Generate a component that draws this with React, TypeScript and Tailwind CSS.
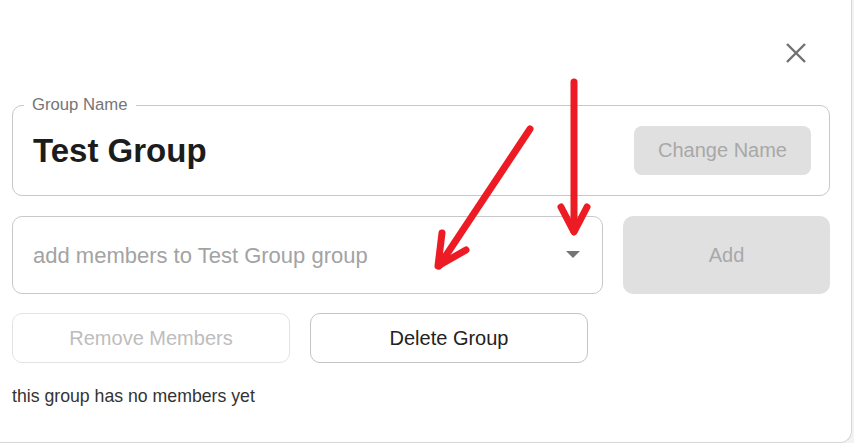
import React from 'react';

const font = { fontFamily: '"Liberation Sans", Arial, sans-serif' };

function CloseIcon() {
  return (
    <svg width="22" height="22" viewBox="0 0 22 22" fill="none">
      <path d="M2 2 L20 20 M20 2 L2 20" stroke="#707070" strokeWidth="2.4" />
    </svg>
  );
}

function Annotations() {
  // red arrows drawn over the screenshot
  return (
    <svg className="pointer-events-none absolute inset-0" width="854" height="443">
      <g stroke="#ed1c24" strokeWidth="7" strokeLinecap="round" strokeLinejoin="round" fill="none">
        <path d="M574 82 L574 231" />
        <path d="M561 207 L574 232 L587 207" />
        <path d="M530 129 L439 266" />
        <path d="M442 233 L438 266 L466 250" />
      </g>
    </svg>
  );
}

export default function App() {
  return (
    <div className="relative h-[443px] w-[854px] overflow-hidden bg-[#f3f3f3]" style={font}>
      <div className="flex h-full w-[852px] flex-col rounded-br-[12px] border-r border-b border-[#d6d6d6] bg-white">
        {/* Header */}
        <div className="flex h-[97px] items-center justify-end pr-[44px] pt-[8px]">
          <CloseIcon />
        </div>

        {/* Group name field */}
        <div className="pl-[12px] pr-[21px]">
          <fieldset className="flex h-[99px] items-center justify-between rounded-[10px] border border-[#c8c8c8] pl-[20px] pr-[18px] pb-[8px]">
            <legend className="ml-[-9px] px-[8px] text-[16.7px] leading-[16px] text-[#757575]">Group Name</legend>
            <span className="text-[33px] font-bold leading-none text-[#1c1c1c]">Test Group</span>
            <button className="h-[49px] w-[177px] rounded-[8px] bg-[#e0e0e0] text-[20px] text-[#a8a8a8]">
              Change Name
            </button>
          </fieldset>
        </div>

        {/* Add members row */}
        <div className="mt-[20px] flex gap-[20px] pl-[12px] pr-[21px]">
          <div className="flex h-[78px] w-[591px] items-center justify-between rounded-[10px] border border-[#c8c8c8] pl-[20px] pr-[22px]">
            <span className="text-[22px] text-[#a3a3a3]">add members to Test Group group</span>
            <svg width="14" height="8" viewBox="0 0 14 8">
              <path d="M0 0 L14 0 L7 7 Z" fill="#757575" />
            </svg>
          </div>
          <button className="h-[78px] flex-1 rounded-[10px] bg-[#e0e0e0] text-[20px] text-[#a8a8a8]">Add</button>
        </div>

        {/* Actions */}
        <div className="mt-[19px] flex gap-[20px] px-[12px]">
          <button className="h-[50px] w-[278px] rounded-[10px] border border-[#e3e3e3] text-[20px] text-[#bdbdbd]">
            Remove Members
          </button>
          <button className="h-[50px] w-[278px] rounded-[10px] border border-[#c4c4c4] text-[20px] text-[#222]">
            Delete Group
          </button>
        </div>

        <p className="mt-[20px] px-[12px] text-[17.7px] text-[#333]">this group has no members yet</p>
      </div>
      <Annotations />
    </div>
  );
}
